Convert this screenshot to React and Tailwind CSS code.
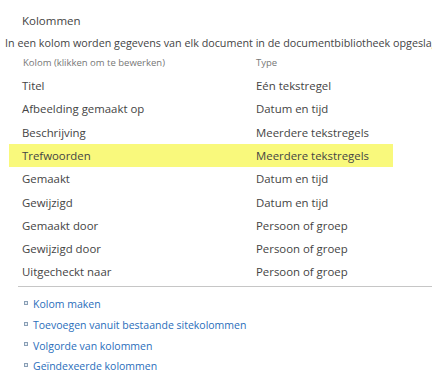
const rows = [
  ['Titel', 'Eén tekstregel'],
  ['Afbeelding gemaakt op', 'Datum en tijd'],
  ['Beschrijving', 'Meerdere tekstregels'],
  ['Trefwoorden', 'Meerdere tekstregels', true],
  ['Gemaakt', 'Datum en tijd'],
  ['Gewijzigd', 'Datum en tijd'],
  ['Gemaakt door', 'Persoon of groep'],
  ['Gewijzigd door', 'Persoon of groep'],
  ['Uitgecheckt naar', 'Persoon of groep'],
];

const links = [
  'Kolom maken',
  'Toevoegen vanuit bestaande sitekolommen',
  'Volgorde van kolommen',
  'Geïndexeerde kolommen',
];

export default function App() {
  return (
    <div className="w-[432px] h-[384px] overflow-hidden bg-white text-[#444] font-['Open_Sans',sans-serif]">
      {/* kop */}
      <div className="pl-[22px] pt-[12px] text-[11.5px] leading-[18px]">Kolommen</div>
      <div className="pl-[5px] pt-[4px] text-[10.75px] leading-[18px] whitespace-nowrap">
        In een kolom worden gegevens van elk document in de documentbibliotheek opgeslagen.
      </div>

      {/* tabel */}
      <div className="mt-[1px] ml-[18px] border-b border-[#c6c6c6]">
        <div className="flex h-[21px] items-center text-[9.5px] text-[#777]">
          <div className="w-[238px] pl-[5px]">Kolom (klikken om te bewerken)</div>
          <div>Type</div>
        </div>
        {rows.map(([name, type, hl]) => (
          <div
            key={name}
            className={`flex h-[23.3px] items-center text-[11.4px] ${hl ? 'bg-[#f9f97c] -ml-[9px] pl-[9px] w-[384px]' : ''}`}
          >
            <div className="w-[238px] pl-[4px]">{name}</div>
            <div>{type}</div>
          </div>
        ))}
        <div className="h-[2px]" />
      </div>

      {/* links */}
      <div className="pl-[24px] pt-[9px] flex flex-col gap-[2.9px]">
        {links.map((l) => (
          <div key={l} className="flex items-center h-[18px] text-[10.5px] text-[#2a6ebb]">
            <span className="w-[4px] h-[4px] border border-[#8a9fb5] bg-[#e8eef4] mr-[5px] -mt-[4px]" />
            <span>{l}</span>
          </div>
        ))}
      </div>
    </div>
  );
}
